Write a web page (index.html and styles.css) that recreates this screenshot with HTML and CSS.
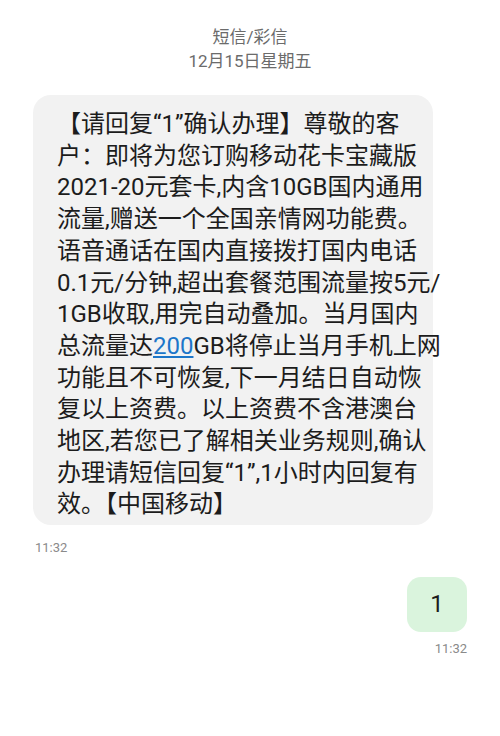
FILE: index.html
```html
<!DOCTYPE html>
<html lang="zh-CN">
<head>
    <meta charset="UTF-8">
    <meta name="viewport" content="width=device-width, initial-scale=1.0">
    <title>短信/彩信</title>
    <link rel="stylesheet" href="styles.css">
</head>
<body>
    <div class="thread-header">
        <div class="thread-type">短信/彩信</div>
        <div class="thread-date">12月15日星期五</div>
    </div>

    <div class="thread">
        <!-- Received message -->
        <div class="msg msg-in">
            <div class="bubble bubble-in">【请回复“1”确认办理】尊敬的客<br>户：即将为您订购移动花卡宝藏版<br>2021-20元套卡,内含10GB国内通用<br>流量,赠送一个全国亲情网功能费。<br>语音通话在国内直接拨打国内电话<br>0.1元/分钟,超出套餐范围流量按5元/<br>1GB收取,用完自动叠加。当月国内<br>总流量达<a class="msg-link" href="#">200</a>GB将停止当月手机上网<br>功能且不可恢复,下一月结日自动恢<br>复以上资费。以上资费不含港澳台<br>地区,若您已了解相关业务规则,确认<br>办理请短信回复“1”,1小时内回复有<br>效。【中国移动】</div>
            <div class="msg-time">11:32</div>
        </div>

        <!-- Sent message -->
        <div class="msg msg-out">
            <div class="bubble bubble-out">1</div>
            <div class="msg-time">11:32</div>
        </div>
    </div>
</body>
</html>
```

FILE: styles.css
```css
body {
    margin: 0;
    background-color: #ffffff;
    font-family: Roboto, "Noto Sans CJK SC", sans-serif;
    color: #1c1c1c;
}

.thread-header {
    padding-top: 25px;
    text-align: center;
    font-size: 17px;
    line-height: 24px;
    color: #6b6b6b;
}

.thread {
    padding: 22px 33px 0 33px;
    display: flex;
    flex-direction: column;
}

.msg {
    display: flex;
    flex-direction: column;
}

.msg-in {
    align-items: flex-start;
}

.msg-out {
    align-items: flex-end;
    margin-top: 20px;
}

.bubble {
    font-size: 24px;
    line-height: 31.7px;
    color: #1c1c1c;
}

.bubble-in {
    width: 400px;
    box-sizing: border-box;
    padding: 14px 8px 4px 24px;
    background-color: #f2f2f2;
    border-radius: 18px;
    white-space: nowrap;
}

.bubble-out {
    width: 60px;
    height: 55px;
    display: flex;
    align-items: center;
    justify-content: center;
    background-color: #daf4dd;
    border-radius: 14px;
}

.msg-link {
    color: #1d76c9;
    text-decoration: underline;
}

.msg-time {
    font-size: 13px;
    line-height: 18px;
    color: #8a8a8a;
}

.msg-in .msg-time {
    margin-top: 14px;
    padding-left: 2px;
}

.msg-out .msg-time {
    margin-top: 8px;
}
```
